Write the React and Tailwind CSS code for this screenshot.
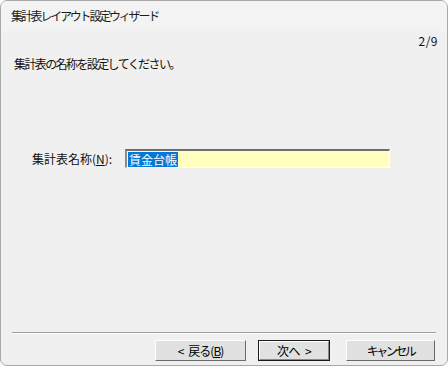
import React from 'react';

const font = { fontFamily: '"Noto Sans CJK JP", "Noto Sans", sans-serif' };

function WizButton({ children, isDefault, className }) {
  return (
    <button
      className={
        'h-[21px] flex items-center justify-center text-[12px] leading-none text-[#000] bg-[#e1e1e1] ' +
        (isDefault
          ? 'border border-[#1a1a1a] '
          : 'border border-t-white border-l-white border-r-[#6a6a6a] border-b-[#6a6a6a] ') +
        className
      }
    >
      {isDefault ? (
        <span className="w-full h-full flex items-center justify-center border border-t-white border-l-white border-r-[#8a8a8a] border-b-[#8a8a8a]">
          {children}
        </span>
      ) : (
        children
      )}
    </button>
  );
}

export default function App() {
  return (
    <div className="w-[448px] h-[366px] bg-white" style={font}>
      <div className="w-full h-full flex flex-col border border-[#a8a8a8] rounded-[7px] overflow-hidden bg-[#f0f0f0]">
        {/* title bar */}
        <div className="h-[30px] shrink-0 bg-[#f3f3f3] flex items-center pl-[10px] text-[12px] text-[#1a1a1a] tracking-[-2.2px]">
          集計表レイアウト設定ウィザード
        </div>

        {/* body */}
        <div className="flex-1 flex flex-col">
          <div className="h-[16px] mt-[2px] pr-[9px] text-right text-[12px] leading-[16px] text-[#111] tracking-[0.5px]">
            2/9
          </div>
          <div className="h-[16px] mt-[7px] pl-[13px] text-[12px] leading-[16px] text-[#111] tracking-[-1.6px]">
            集計表の名称を設定してください。
          </div>

          <div className="mt-[77px] flex items-center h-[19px]">
            <div className="pl-[31px] w-[124px] text-[12px] leading-[16px] text-[#111]">
              集計表名称(<span className="underline">N</span>):
            </div>
            <div className="w-[265px] h-[19px] bg-[#ffffc0] border-t-2 border-l-2 border-t-[#6e6e6e] border-l-[#8a8a8a] border-r border-b border-r-white border-b-white flex items-center pl-[1px]">
              <span className="bg-[#0078d7] text-white text-[12px] leading-[15px] px-[1px]">賃金台帳</span>
            </div>
          </div>

          <div className="flex-1" />

          {/* separator */}
          <div className="mx-[11px] h-[2px] border-t border-t-[#a0a0a0] border-b border-b-white" />

          <div className="mt-[6px] mb-[4px] flex justify-end pr-[12px]">
            <WizButton className="w-[91px] tracking-[-1px]">
              <span>&lt;</span>
              <span className="ml-[5px]">戻る(<span className="underline">B</span>)</span>
            </WizButton>
            <WizButton isDefault className="w-[72px] ml-[12px] tracking-[-0.5px]">
              <span>次へ</span>
              <span className="ml-[5px]">&gt;</span>
            </WizButton>
            <WizButton className="w-[89px] ml-[16px] tracking-[-2.5px]">キャンセル</WizButton>
          </div>
        </div>
      </div>
    </div>
  );
}
